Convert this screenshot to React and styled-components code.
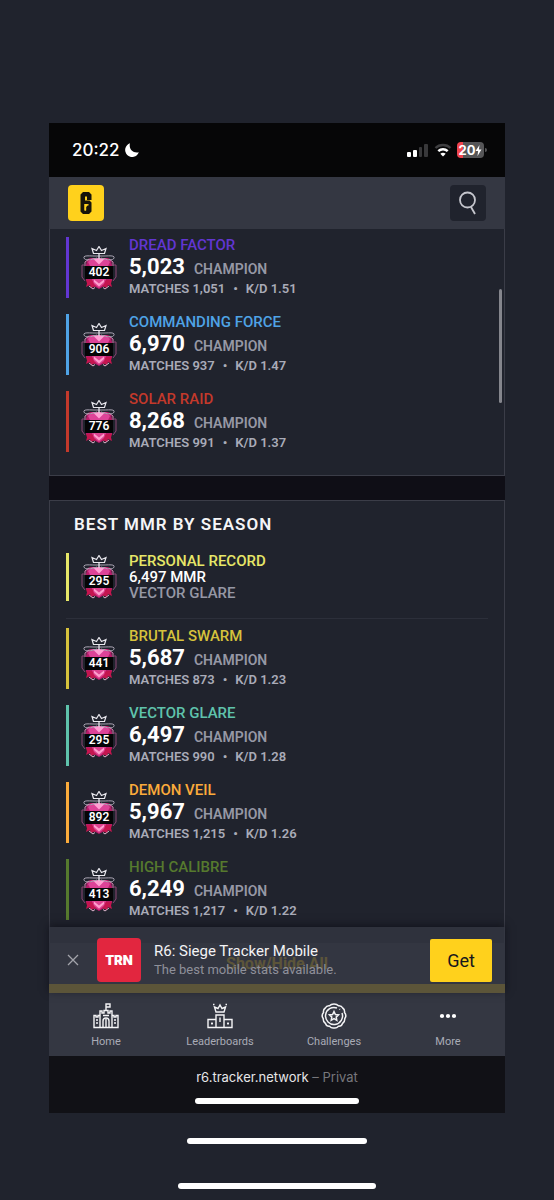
import React from 'react';
import styled, { createGlobalStyle } from 'styled-components';

const recentSeasons = [
  { name: 'DREAD FACTOR', color: '#6236d2', rank: 402, mmr: '5,023', matches: '1,051', kd: '1.51' },
  { name: 'COMMANDING FORCE', color: '#4fa3e6', rank: 906, mmr: '6,970', matches: '937', kd: '1.47' },
  { name: 'SOLAR RAID', color: '#c3392b', rank: 776, mmr: '8,268', matches: '991', kd: '1.37' },
];

const bestSeasons = [
  { name: 'BRUTAL SWARM', color: '#d6c23c', rank: 441, mmr: '5,687', matches: '873', kd: '1.23' },
  { name: 'VECTOR GLARE', color: '#5fc3ac', rank: 295, mmr: '6,497', matches: '990', kd: '1.28' },
  { name: 'DEMON VEIL', color: '#fbab3b', rank: 892, mmr: '5,967', matches: '1,215', kd: '1.26' },
  { name: 'HIGH CALIBRE', color: '#567a2e', rank: 413, mmr: '6,249', matches: '1,217', kd: '1.22' },
];

const RankBadge = ({ rank }) => (
  <BadgeWrapper>
    <svg width="36" height="44" viewBox="0 0 36 44" fill="none">
      <path d="M6 14 L9 12 H27 L30 14 L31 19 V34 L27 38 L18 43 L9 38 L5 34 V19 Z" fill="#b51c69" />
      <path d="M11 12 H25 L29 16 L27 20 H9 L7 16 Z" fill="#dd4398" />
      <path d="M12 12.500 H24 L18 18.500 Z" fill="#ff9fd3" />
      <path d="M4 20 V16 L8 13 M32 20 V16 L28 13" stroke="#d884b3" />
      <path d="M4 19 H1 V31 L4 35 M32 19 H35 V31 L32 35" stroke="#8b4775" />
      <path d="M5 34 H11 L15 40 L10 42 L9 39 L5 41 L6 37.500 Z" fill="#c4154f" />
      <path d="M31 34 H25 L21 40 L26 42 L27 39 L31 41 L30 37.500 Z" fill="#c4154f" />
      <path d="M11 33 H25 L23 38 L18 42 L13 38 Z" fill="#de4390" />
      <path d="M13 33.500 L18 37.500 L23 33.500 V36 L18 40.500 L13 36 Z" fill="#ff9fcd" />
      <path d="M8 40 L12 43 L14 41.500 M28 40 L24 43 L22 41.500" stroke="#dcb3cb" />
      <path
        d="M16 12 C10 14 4 15 3 12 C2 9 8 10 13 10 H23 C28 10 34 9 33 12 C32 15 26 14 20 12"
        stroke="#a9a4b2"
      />
      <path d="M18 8 V13" stroke="#dedbe4" strokeWidth="1.400" />
      <path d="M12.500 7.500 L11 2.500 L15.500 4.500 L18 0.500 L20.500 4.500 L25 2.500 L23.500 7.500 Z" stroke="#e9e8ee" strokeWidth="1.200" />
      <rect x="4" y="20" width="28" height="13" fill="#050507" />
    </svg>
    <BadgeNumber>{rank}</BadgeNumber>
  </BadgeWrapper>
);

const SeasonRow = ({ season }) => (
  <Row $color={season.color}>
    <RankBadge rank={season.rank} />
    <div>
      <SeasonName $color={season.color}>{season.name}</SeasonName>
      <RatingLine>
        <Rating>{season.mmr}</Rating>
        <RankName>CHAMPION</RankName>
      </RatingLine>
      <Stats>
        <span>MATCHES {season.matches}</span>
        <span>•</span>
        <span>K/D {season.kd}</span>
      </Stats>
    </div>
  </Row>
);

const SiegeLogo = () => (
  <svg width="12" height="22" viewBox="0 0 12 22" aria-hidden="true">
    <path
      fill="#17140a"
      fillRule="evenodd"
      d="M3 0 H9 L11.500 2.500 V8 H7 V4.500 H5 V8.500 H9.500 L11.500 10.500 V19.500 L9 22 H3 L0.500 19.500 V2.500 Z M4.500 12 V18.500 H6 V14.500 L7.500 13 V12 Z"
    />
    <path fill="#ffd11c" d="M4.500 12 H6.200 V13 L7.500 12 H8.500 V13.500 H7.500 L6.200 15 V18.500 H4.500 Z" />
  </svg>
);

const StatusIcons = () => (
  <StatusRight>
    <svg width="22" height="14" viewBox="0 0 22 14">
      <rect x="0" y="9" width="4" height="5" rx="1" fill="#fff" />
      <rect x="6" y="7" width="4" height="7" rx="1" fill="#fff" />
      <rect x="12" y="4" width="3" height="10" rx="1" fill="#38383a" />
      <rect x="17" y="1" width="4" height="13" rx="1" fill="#38383a" />
    </svg>
    <svg width="18" height="14" viewBox="0 0 18 14" fill="none" strokeWidth="2.400">
      <path d="M1.500 5 C5.500 1 12.500 1 16.500 5" stroke="#3e3e40" />
      <path d="M4.300 8.200 C7 5.500 11 5.500 13.700 8.200" stroke="#fff" />
      <path d="M9 13.500 L6.300 10.700 C8 9.300 10 9.300 11.700 10.700 Z" fill="#fff" />
    </svg>
    <Battery>
      20
      <svg width="7" height="11" viewBox="0 0 6 11">
        <path d="M4 0 L0 6 H2.600 L2 11 L6 4.600 H3.400 Z" fill="#fff" />
      </svg>
    </Battery>
    <BatteryCap />
  </StatusRight>
);

const HomeIcon = () => (
  <svg width="26" height="26" viewBox="0 0 26 26" fill="none" stroke="#f4f4f6" strokeWidth="1.400">
    <path d="M13 7 V1 H17 V4 H13" />
    <path d="M7 24.500 V8 H9 V10 H11 V7.500 H15 V10 H17 V8 H19 V24.500" />
    <path d="M7 12.500 H5 V14 H3 V12.500 H1 V24.500 H25 V12.500 H23 V14 H21 V12.500 H19" />
    <path d="M10 24 V18 C10 14 16 14 16 18 V24 M13 16 V24 M3 17 H5 M3 20 H5 M21 17 H23 M21 20 H23 M10 12.500 H16" />
  </svg>
);

const LeaderboardIcon = () => (
  <svg width="26" height="26" viewBox="0 0 26 26" fill="none" stroke="#f4f4f6" strokeWidth="1.400">
    <path d="M9 9 L7.500 4 L11 5.500 L13 2 L15 5.500 L18.500 4 L17 9 Z" />
    <path d="M9 24.500 V12 H17 V24.500 M9 16.500 H1 V24.500 H25 V16.500 H17 M1 24.500 H25" />
    <path d="M13 14.500 V19 M5 19.500 V21.500 M4 20.500 H6 M20 20.500 H22 M21 19.500 V21.500" />
    <path d="M6 1.500 H7.500 M18.500 1.500 H20" />
  </svg>
);

const ChallengeIcon = () => (
  <svg width="26" height="26" viewBox="0 0 26 26" fill="none" stroke="#f4f4f6" strokeWidth="1.500">
    <path d="M13 1 Q16 1 17.500 2.800 Q20.500 2.500 21.700 5 Q24 6.500 23.500 9.500 Q26 12.500 23.800 15.500 Q24 19 21.500 20.500 Q20.500 23.500 17.500 23.200 Q15.500 25.500 13 25 Q10.500 25.500 8.500 23.200 Q5.500 23.500 4.500 20.500 Q2 19 2.200 15.500 Q0 12.500 2.500 9.500 Q2 6.500 4.300 5 Q5.500 2.500 8.500 2.800 Q10 1 13 1 Z" />
    <path d="M16 5 A8.500 8.500 0 1 0 21 10 M18.500 6 L19 6.500" />
    <path d="M13 8.500 L14.400 11.500 L17.500 11.900 L15.200 14.100 L15.800 17.300 L13 15.700 L10.200 17.300 L10.800 14.100 L8.500 11.900 L11.600 11.500 Z" />
  </svg>
);

const MoreIcon = () => (
  <svg width="26" height="26" viewBox="0 0 26 26" fill="#fff">
    <circle cx="7" cy="13" r="2.100" />
    <circle cx="13" cy="13" r="2.100" />
    <circle cx="19" cy="13" r="2.100" />
  </svg>
);

const navItems = [
  { label: 'Home', Icon: HomeIcon },
  { label: 'Leaderboards', Icon: LeaderboardIcon },
  { label: 'Challenges', Icon: ChallengeIcon },
  { label: 'More', Icon: MoreIcon },
];

const App = () => (
  <Page>
    <GlobalStyle />
    <Phone>
      <StatusBar>
        <Clock>
          20:22
          <svg width="14" height="14" viewBox="0 0 14 14">
            <path d="M5 0.300 A7 7 0 1 0 13.800 9.200 C8 10.500 3.500 6 5 0.300 Z" fill="#fff" />
          </svg>
        </Clock>
        <StatusIcons />
      </StatusBar>
      <Header>
        <LogoLink href="#" aria-label="R6 Tracker">
          <SiegeLogo />
        </LogoLink>
        <SearchButton aria-label="Search">
          <svg width="20" height="24" viewBox="0 0 20 24" fill="none" stroke="#c5c6cd" strokeWidth="1.800">
            <circle cx="9.500" cy="9" r="7.500" />
            <path d="M13 16 L17 23" />
          </svg>
        </SearchButton>
      </Header>
      <Content>
        <ScrollThumb />
        <Card $first>
          <SeasonList>
            {recentSeasons.map((season) => (
              <SeasonRow key={season.name} season={season} />
            ))}
          </SeasonList>
        </Card>
        <Card>
          <CardTitle>BEST MMR BY SEASON</CardTitle>
          <Row $color="#e7e768">
            <RankBadge rank={295} />
            <Record>
              <RecordTitle>PERSONAL RECORD</RecordTitle>
              <RecordValue>6,497 MMR</RecordValue>
              <RecordSeason>VECTOR GLARE</RecordSeason>
            </Record>
          </Row>
          <Divider />
          <SeasonList>
            {bestSeasons.map((season) => (
              <SeasonRow key={season.name} season={season} />
            ))}
          </SeasonList>
        </Card>
        <ToggleButton>Show/Hide All</ToggleButton>
        <Banner>
          <CloseButton aria-label="Close">
            <svg width="12" height="12" viewBox="0 0 12 12" stroke="#a3a4ab" strokeWidth="1.300">
              <path d="M1 1 L11 11 M11 1 L1 11" />
            </svg>
          </CloseButton>
          <AppLogo>TRN</AppLogo>
          <BannerText>
            <BannerTitle>R6: Siege Tracker Mobile</BannerTitle>
            <BannerDesc>The best mobile stats available.</BannerDesc>
          </BannerText>
          <GetButton>Get</GetButton>
        </Banner>
      </Content>
      <Nav>
        {navItems.map(({ label, Icon }) => (
          <NavLink key={label} href="#">
            <Icon />
            {label}
          </NavLink>
        ))}
      </Nav>
      <AddressBar>
        <div>
          r6.tracker.network <Muted>– Privat</Muted>
        </div>
        <Indicator $width="36%" />
      </AddressBar>
    </Phone>
    <Indicators>
      <Indicator $width="180px" />
      <Indicator $width="198px" />
    </Indicators>
  </Page>
);

const GlobalStyle = createGlobalStyle`
  * {
    box-sizing: border-box;
  }
  body {
    margin: 0;
    background: #20232d;
    font-family: Roboto, 'Liberation Sans', sans-serif;
  }
  svg {
    display: block;
    flex-shrink: 0;
  }
  button {
    border: 0;
    padding: 0;
    font-family: inherit;
    cursor: pointer;
  }
  a {
    text-decoration: none;
  }
`;

const Page = styled.div`
  padding: 123px 49px 11px;
`;

const Phone = styled.div`
  background: #0f0e16;
`;

const StatusBar = styled.div`
  display: flex;
  align-items: center;
  justify-content: space-between;
  height: 54px;
  padding: 0 18px 0 23px;
  background: #060607;
  color: #fff;
`;

const Clock = styled.div`
  display: flex;
  align-items: center;
  gap: 5px;
  font-family: Inter, sans-serif;
  font-size: 17px;
  font-weight: 500;
`;

const StatusRight = styled.div`
  display: flex;
  align-items: center;
  gap: 5px;
`;

const Battery = styled.div`
  display: flex;
  align-items: center;
  justify-content: center;
  width: 27px;
  height: 16px;
  border-radius: 4px;
  background: linear-gradient(to right, #f0444d 6px, #555557 6px);
  font-family: Inter, sans-serif;
  font-size: 13px;
  font-weight: 700;
`;

const BatteryCap = styled.div`
  width: 2px;
  height: 4px;
  margin-left: -4px;
  border-radius: 0 2px 2px 0;
  background: #555557;
`;

const Header = styled.header`
  display: flex;
  align-items: center;
  justify-content: space-between;
  height: 52px;
  padding: 0 19px;
  background: #343742;
`;

const LogoLink = styled.a`
  display: flex;
  align-items: center;
  justify-content: center;
  width: 36px;
  height: 36px;
  border-radius: 4px;
  background: #ffd11c;
`;

const SearchButton = styled.button`
  display: flex;
  align-items: center;
  justify-content: center;
  width: 36px;
  height: 36px;
  border-radius: 4px;
  background: #20232d;
`;

const Content = styled.main`
  position: relative;
  background: #20232d;
`;

const ScrollThumb = styled.div`
  position: absolute;
  top: 60px;
  right: 3px;
  width: 3px;
  height: 114px;
  border-radius: 2px;
  background: #85868d;
`;

const Card = styled.section`
  padding: ${({ $first }) => ($first ? '8px 16px 23px' : '0 16px 23px')};
  border: 1px solid #3b3d48;
  border-width: ${({ $first }) => ($first ? '0 1px 1px' : '1px 1px 0')};

  & + & {
    position: relative;
    margin-top: 24px;
    box-shadow: 0 -24px 0 #0f0e16;
  }
`;

const CardTitle = styled.h2`
  margin: 0;
  padding: 11px 8px 17px;
  color: #f5f5f7;
  font-size: 17px;
  font-weight: 600;
  line-height: 24px;
  letter-spacing: 1px;
`;

const SeasonList = styled.div`
  display: grid;
  gap: 16px;
`;

const Row = styled.div`
  display: flex;
  align-items: center;
  gap: 12px;
  padding-left: 12px;
  border-left: 3px solid ${({ $color }) => $color};
`;

const BadgeWrapper = styled.div`
  position: relative;
`;

const BadgeNumber = styled.span`
  position: absolute;
  top: 20px;
  left: 0;
  width: 100%;
  color: #fff;
  font-size: 12px;
  font-weight: 600;
  line-height: 13px;
  text-align: center;
`;

const SeasonName = styled.div`
  color: ${({ $color }) => $color};
  font-size: 15px;
  font-weight: 500;
  line-height: 17px;
`;

const RatingLine = styled.div`
  display: flex;
  align-items: baseline;
  gap: 9px;
  line-height: 26px;
`;

const Rating = styled.span`
  color: #fff;
  font-size: 22px;
  font-weight: 700;
`;

const RankName = styled.span`
  color: #9698a5;
  font-size: 14px;
  font-weight: 600;
  line-height: 18px;
`;

const Stats = styled.div`
  display: flex;
  gap: 8px;
  color: #a9abb8;
  font-size: 13px;
  font-weight: 600;
  line-height: 18px;
`;

const Record = styled.div`
  font-size: 15px;
  font-weight: 500;
  line-height: 16px;
`;

const RecordTitle = styled.div`
  color: #e7e768;
`;

const RecordValue = styled.div`
  color: #fff;
`;

const RecordSeason = styled.div`
  color: #9698a5;
`;

const Divider = styled.hr`
  height: 1px;
  margin: 17px 0 9px;
  border: 0;
  background: #2c2f3a;
`;

const ToggleButton = styled.button`
  display: block;
  width: 100%;
  height: 50px;
  border-bottom: 9px solid #ffd11c;
  background: #353844;
  color: #ffd11c;
  font-size: 16px;
  font-weight: 700;
`;

const Banner = styled.aside`
  position: absolute;
  right: 0;
  bottom: 0;
  left: 0;
  display: flex;
  align-items: center;
  height: 66px;
  padding: 0 13px 0 18px;
  background: rgba(51, 54, 65, 0.8);
  box-shadow: 0 -2px 8px rgba(10, 10, 18, 0.6);
`;

const CloseButton = styled.button`
  background: none;
`;

const AppLogo = styled.div`
  display: flex;
  align-items: center;
  justify-content: center;
  width: 44px;
  height: 44px;
  margin: 0 13px 0 18px;
  border-radius: 4px;
  background: #e2263f;
  color: #fff;
  font-family: Inter, sans-serif;
  font-size: 13px;
  font-weight: 900;
`;

const BannerText = styled.div`
  flex: 1;
`;

const BannerTitle = styled.div`
  color: #f3f3f5;
  font-size: 15px;
  line-height: 19px;
`;

const BannerDesc = styled.div`
  color: #8f909a;
  font-size: 13px;
  line-height: 17px;
`;

const GetButton = styled.button`
  width: 62px;
  height: 43px;
  border-radius: 2px;
  background: #ffd11c;
  color: #17181c;
  font-size: 18px;
`;

const Nav = styled.nav`
  display: grid;
  grid-template-columns: repeat(4, 1fr);
  height: 63px;
  padding-top: 10px;
  background: #343742;
`;

const NavLink = styled.a`
  display: flex;
  flex-direction: column;
  align-items: center;
  gap: 6px;
  color: #a9abb6;
  font-size: 11px;
  line-height: 14px;
`;

const AddressBar = styled.footer`
  display: flex;
  flex-direction: column;
  align-items: center;
  gap: 11px;
  height: 57px;
  padding-top: 12px;
  background: #111116;
  color: #e6e6e8;
  font-family: Inter, sans-serif;
  font-size: 13px;
  line-height: 19px;
`;

const Muted = styled.span`
  color: #77777c;
`;

const Indicator = styled.div`
  width: ${({ $width }) => $width};
  height: 6px;
  border-radius: 3px;
  background: #fff;
`;

const Indicators = styled.div`
  display: flex;
  flex-direction: column;
  align-items: center;
  gap: 39px;
  padding-top: 25px;
`;

export default App;
